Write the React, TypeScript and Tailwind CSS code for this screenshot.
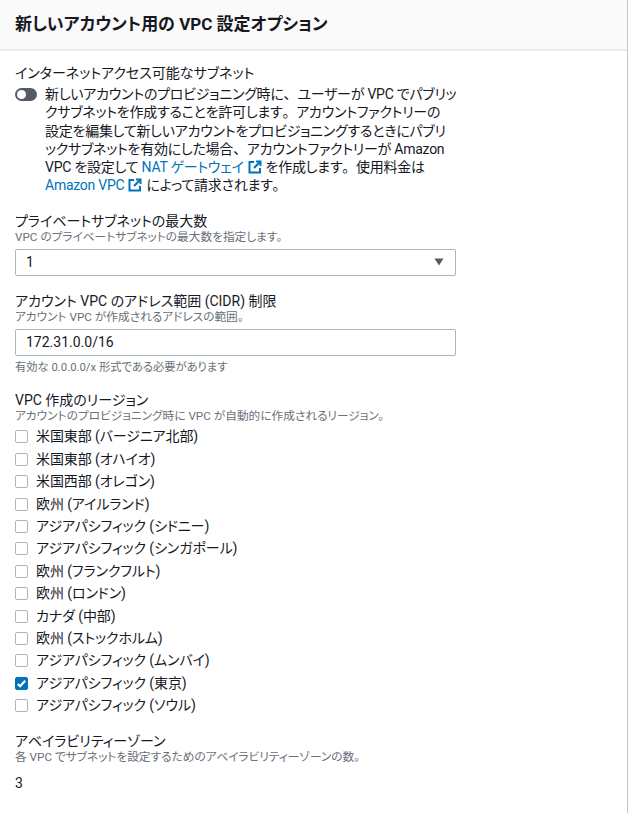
const REGIONS = [
  '米国東部 (バージニア北部)',
  '米国東部 (オハイオ)',
  '米国西部 (オレゴン)',
  '欧州 (アイルランド)',
  'アジアパシフィック (シドニー)',
  'アジアパシフィック (シンガポール)',
  '欧州 (フランクフルト)',
  '欧州 (ロンドン)',
  'カナダ (中部)',
  '欧州 (ストックホルム)',
  'アジアパシフィック (ムンバイ)',
  'アジアパシフィック (東京)',
  'アジアパシフィック (ソウル)',
];

function ExternalIcon() {
  return (
    <svg viewBox="0 0 14 14" className="inline-block w-[14px] h-[14px] align-[-2px] mx-[4px]" fill="none" stroke="#0073bb" strokeWidth="2">
      <path d="M6 2H1.5v10.5H12V8" />
      <path d="M8 1.5h4.5V6" />
      <path d="M12.5 1.5L6 8" />
    </svg>
  );
}

// 句読点は全角のまま
function Punct({ children }: { children: string }) {
  return <span className="[font-feature-settings:normal]">{children}</span>;
}

function Field({ label, hint }: { label: string; hint: string }) {
  return (
    <div>
      <div className="text-[14px] leading-[18px] text-[#16191f]">{label}</div>
      <div className="text-[11.7px] leading-[15px] text-[#687078]">{hint}</div>
    </div>
  );
}

export default function App() {
  return (
    <div className="w-[628px] h-[813px] bg-white border-r border-[#c4c4c4] overflow-hidden font-['Roboto','Noto_Sans_CJK_JP',sans-serif] [font-feature-settings:'palt']">
      <div className="h-[51px] bg-[#fafafa] border-b-2 border-[#eaeded] pl-[15px] pt-[13px]">
        <h2 className="text-[17px] leading-[22px] font-bold text-[#16191f] whitespace-nowrap">新しいアカウント用の VPC 設定オプション</h2>
      </div>

      <div className="pl-[15px] pt-[13px]">
        <div className="text-[14px] leading-[18px] text-[#16191f]">インターネットアクセス可能なサブネット</div>
        <div className="flex mt-[3px] w-[440px]">
          <div className="mt-[3px] w-[22px] h-[13px] rounded-full bg-[#545b64] flex items-center pl-[2px] shrink-0">
            <div className="w-[9px] h-[9px] rounded-full bg-white" />
          </div>
          <p className="ml-[8px] text-[14px] leading-[18.3px] tracking-[-0.25px] text-[#16191f] whitespace-nowrap">
            新しいアカウントのプロビジョニング時に<Punct>、</Punct>ユーザーが VPC でパブリッ
            <br />
            クサブネットを作成することを許可します<Punct>。</Punct>アカウントファクトリーの
            <br />
            設定を編集して新しいアカウントをプロビジョニングするときにパブリ
            <br />
            ックサブネットを有効にした場合<Punct>、</Punct>アカウントファクトリーが Amazon
            <br />
            VPC を設定して <span className="text-[#0073bb]">NAT ゲートウェイ</span>
            <ExternalIcon />
            を作成します<Punct>。</Punct>使用料金は
            <br />
            <span className="text-[#0073bb]">Amazon VPC</span>
            <ExternalIcon />
            によって請求されます<Punct>。</Punct>
          </p>
        </div>

        <div className="mt-[17px] w-[441px]">
          <Field label="プライベートサブネットの最大数" hint="VPC のプライベートサブネットの最大数を指定します。" />
          <div className="mt-[4px] h-[27px] border border-[#aab7b8] rounded-[2px] flex items-center justify-between pl-[10px] pr-[11px] text-[14px] text-[#16191f]">
            <span>1</span>
            <svg viewBox="0 0 10 8" className="w-[10px] h-[8px]">
              <path d="M0.5 0.5h9L5 7.5z" fill="#545b64" />
            </svg>
          </div>
        </div>

        <div className="mt-[16px] w-[441px]">
          <Field label="アカウント VPC のアドレス範囲 (CIDR) 制限" hint="アカウント VPC が作成されるアドレスの範囲。" />
          <div className="mt-[4px] h-[27px] border border-[#aab7b8] rounded-[2px] flex items-center pl-[10px] text-[14px] text-[#16191f]">
            172.31.0.0/16
          </div>
          <div className="mt-[4px] text-[11.3px] leading-[15px] text-[#687078]">有効な 0.0.0.0/x 形式である必要があります</div>
        </div>

        <div className="mt-[16px]">
          <Field label="VPC 作成のリージョン" hint="アカウントのプロビジョニング時に VPC が自動的に作成されるリージョン。" />
          <div className="mt-[2px]">
            {REGIONS.map((name) => {
              const checked = name === 'アジアパシフィック (東京)';
              return (
                <div key={name} className="h-[22.4px] flex items-center text-[14px] text-[#16191f]">
                  <div
                    className={`w-[13px] h-[13px] rounded-[2px] border flex items-center justify-center ${
                      checked ? 'bg-[#0073bb] border-[#0073bb]' : 'bg-white border-[#aab7b8]'
                    }`}
                  >
                    {checked && (
                      <svg viewBox="0 0 12 12" className="w-[11px] h-[11px]" fill="none" stroke="white" strokeWidth="2.4">
                        <path d="M2 6.5l2.5 2.5L10 3" />
                      </svg>
                    )}
                  </div>
                  <span className="ml-[8px] tracking-[-0.1px]">{name}</span>
                </div>
              );
            })}
          </div>
        </div>

        <div className="mt-[15px]">
          <Field label="アベイラビリティーゾーン" hint="各 VPC でサブネットを設定するためのアベイラビリティーゾーンの数。" />
          <div className="mt-[9px] text-[14px] leading-[18px] text-[#16191f]">3</div>
        </div>
      </div>
    </div>
  );
}
